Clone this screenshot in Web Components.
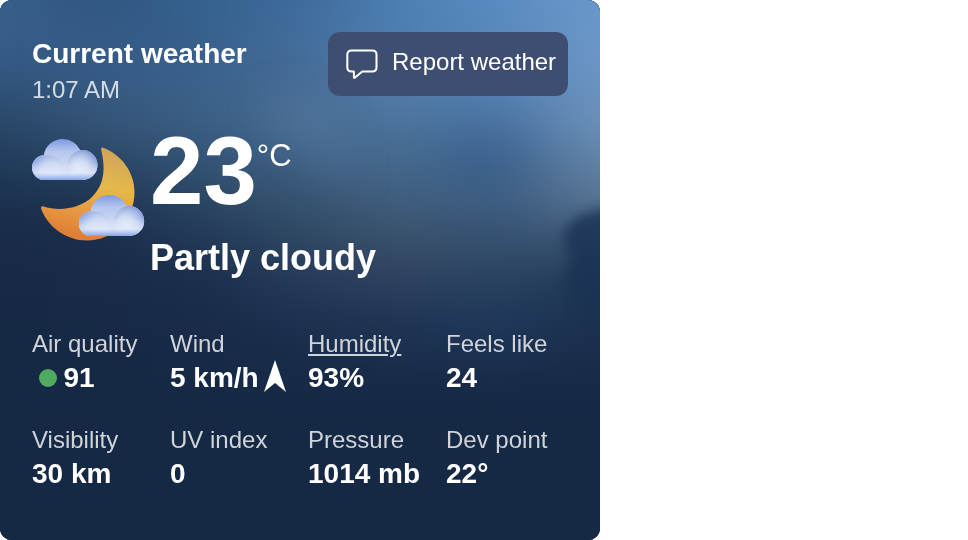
<!DOCTYPE html>
<html lang="en"><head><meta charset="utf-8"><title>Current weather</title>
<style>body{margin:0;background:#fff;font-family:"Liberation Sans",Arial,sans-serif}</style></head>
<body>
<weather-card>
  <weather-heading slot="heading" time="1:07 AM">Current weather</weather-heading>
  <report-button slot="action">Report weather</report-button>
  <weather-now slot="now" temp="23" unit="°C">Partly cloudy</weather-now>
  <weather-stat label="Air quality"><air-dot slot="before"></air-dot>91</weather-stat>
  <weather-stat label="Wind">5 km/h<wind-arrow slot="after"></wind-arrow></weather-stat>
  <weather-stat label="Humidity" underlined>93%</weather-stat>
  <weather-stat label="Feels like">24</weather-stat>
  <weather-stat label="Visibility">30 km</weather-stat>
  <weather-stat label="UV index">0</weather-stat>
  <weather-stat label="Pressure">1014 mb</weather-stat>
  <weather-stat label="Dev point">22°</weather-stat>
</weather-card>
<script>
const define=(name,render)=>customElements.define(name,class extends HTMLElement{
  connectedCallback(){ if(!this.shadowRoot) this.attachShadow({mode:'open'}).innerHTML=render(this); }
});

// Each row holds sky colours at 100px steps across the card, rows are 40px apart.
const sky=[
 '365f8a 30567f 34618f 3e6a9a 4d7fb4 5a8bc2 6897cb',
 '385d88 355a85 365f8c 426d9b 4d7eb2 5787bb 6c98c8',
 '31547d 365a84 3b628c 466a94 5580ab 5682b3 6b94c2',
 '294868 355579 3b5e84 486c93 4c749d 4a74a5 6c92ba',
 '213c5b 2a4664 335376 3f6086 46698f 3f638d 6384a9',
 '1b304e 1f3654 2a4663 36536f 405f7e 3e5e83 587592',
 '192b49 1a2d4c 223856 2d4662 3a506b 34506f 3a5572',
 '172945 182a48 1b2f4d 263b5a 2e4160 29435f 203856',
 '152844 162945 182b49 1c3050 203555 20385a 1c3150',
 '152844 152844 162945 182c4a 1a2e4d 1b3050 192d4a',
 '152844 152844 152844 152844 152844 152844 152844'
].map(r=>r.split(' '));
define('sky-backdrop',()=>`<style>:host{display:block}svg{display:block;width:600px;height:540px}</style>
<svg viewBox="0 0 600 540" aria-hidden="true"><defs>
${sky.map((r,i)=>`<linearGradient id="r${i}" gradientUnits="userSpaceOnUse" x1="0" y1="0" x2="600" y2="0">${r.map((c,j)=>`<stop offset="${j/6}" stop-color="#${c}"/>`).join('')}</linearGradient>`).join('')}
<filter id="v" filterUnits="userSpaceOnUse" x="-80" y="-80" width="760" height="760" color-interpolation-filters="sRGB"><feGaussianBlur stdDeviation="22 18"/></filter>
<filter id="s" filterUnits="userSpaceOnUse" x="0" y="0" width="760" height="540" color-interpolation-filters="sRGB"><feGaussianBlur stdDeviation="6"/></filter>
<filter id="l" filterUnits="userSpaceOnUse" x="-100" y="-100" width="800" height="700" color-interpolation-filters="sRGB"><feGaussianBlur stdDeviation="20"/></filter></defs>
<rect width="600" height="540" fill="#152844"/>
<g filter="url(#v)">${sky.map((r,i)=>`<rect x="-80" y="${i?i*40-20:-80}" width="760" height="${i?i==10?260:41:101}" fill="url(#r${i})"/>`).join('')}</g>
<g filter="url(#l)"><path d="M255 110Q300 75 335 120L360 190Q300 160 255 110Z" fill="#7696b8" opacity=".16"/><ellipse cx="480" cy="165" rx="38" ry="28" fill="#2d568a" opacity=".22"/></g>
<path filter="url(#s)" d="M640 200L594 211L579 216L566 228L563 241L570 258L565 282L571 300L585 315H650Z" fill="#1b3353" opacity=".82"/>
</svg>`);

define('weather-card',()=>`<style>
:host{display:grid;width:600px;height:540px;border-radius:12px;overflow:hidden;background:#152844;color:#fff}
sky-backdrop,main{grid-area:1/1}
main{z-index:1;display:flex;flex-direction:column;box-sizing:border-box;padding:32px 0 0 32px}
header{display:flex;justify-content:space-between;padding-right:32px;height:98px}
section{display:grid;grid-template-columns:repeat(4,138px);grid-auto-rows:96px;margin-top:196px}
.now{height:0}
</style><sky-backdrop></sky-backdrop><main><header><slot name="heading"></slot><slot name="action"></slot></header><div class="now"><slot name="now"></slot></div><section><slot></slot></section></main>`);

define('weather-heading',e=>`<style>:host{display:block}h1{margin:6px 0 0;font-size:28px;line-height:32px;font-weight:700}
p{margin:6px 0 0;font-size:24px;line-height:28px;color:rgba(255,255,255,.79)}</style><h1><slot></slot></h1><p>${e.getAttribute('time')}</p>`);

define('report-button',()=>`<style>:host{display:block}
button{display:flex;align-items:center;gap:14px;width:240px;height:64px;box-sizing:border-box;border:0;border-radius:12px;background:#3e4e71;color:#fff;font:24px "Liberation Sans",Arial,sans-serif;padding:0 0 4px 18px;white-space:nowrap}
svg{flex:none;margin-top:4px}</style>
<button><svg width="32" height="30" viewBox="0 0 32 30" fill="none" stroke="#fff" stroke-width="2" stroke-linejoin="round" aria-hidden="true"><path d="M5.8 1.5H26.2Q30.5 1.5 30.5 5.8V18.2Q30.5 22.5 26.2 22.5H16.2L8.8 28.7Q7.9 29.3 7.9 28.2V22.5H5.8Q1.3 22.5 1.3 18.2V5.8Q1.3 1.5 5.8 1.5Z"/></svg><slot></slot></button>`);

define('moon-icon',()=>`<style>:host{display:block}svg{display:block}</style>
<svg width="116" height="110" viewBox="30 135 116 110" aria-hidden="true"><defs>
<linearGradient id="m" gradientUnits="userSpaceOnUse" x1="112" y1="147" x2="92" y2="241"><stop stop-color="#cda25c"/><stop offset=".42" stop-color="#e6b94b"/><stop offset=".75" stop-color="#e69640"/><stop offset="1" stop-color="#df7c35"/></linearGradient>
<linearGradient id="top" gradientUnits="userSpaceOnUse" x1="0" y1="139" x2="0" y2="165"><stop stop-color="#7c98e0"/><stop offset=".45" stop-color="#b3c5ed"/><stop offset="1" stop-color="#cad8f2"/></linearGradient>
<radialGradient id="right" gradientUnits="userSpaceOnUse" cx="79" cy="170" r="22"><stop stop-color="#e6edfb"/><stop offset=".45" stop-color="#cfdbf4"/><stop offset=".78" stop-color="#a3b5e2"/><stop offset="1" stop-color="#7892d8"/></radialGradient>
<radialGradient id="left" gradientUnits="userSpaceOnUse" cx="53" cy="174" r="25"><stop stop-color="#dae4f7"/><stop offset=".5" stop-color="#c9d6f2"/><stop offset="1" stop-color="#859fe0"/></radialGradient>
<linearGradient id="base" gradientUnits="userSpaceOnUse" x1="0" y1="162" x2="0" y2="180"><stop stop-color="#dfe8f9" stop-opacity="0"/><stop offset=".6" stop-color="#e2eafa" stop-opacity=".75"/><stop offset="1" stop-color="#86a2ea"/></linearGradient>
<clipPath id="cl"><circle cx="62.8" cy="158.3" r="19.3"/><rect x="32" y="155.2" width="40" height="24.8" rx="12.4"/><rect x="60" y="150" width="37.5" height="30" rx="15"/><rect x="44" y="165" width="36" height="15"/></clipPath>
<g id="cloud" clip-path="url(#cl)"><rect x="32" y="138" width="66" height="43" fill="url(#top)"/>
<path d="M30 155.2H44.5C53 155.2 60 158 63.5 166L70 181H30Z" fill="url(#left)"/>
<path d="M67.5 166C67.5 157 74 150 82.5 150H99V181H63Q68 174 67.5 166Z" fill="url(#right)"/>
<rect x="32" y="162" width="66" height="18" fill="url(#base)"/></g></defs>
<path d="M102.5 147.5C121 154 134.5 172 134.5 192C134.5 220 113 240.5 87 240.5C66 240.5 48 227 41.2 209Q40.4 206 43 206.3C60 212 81 208 92 197C105 184 105.5 168 101.1 149.5Q101 147.2 102.5 147.5Z" fill="url(#m)"/>
<use href="#cloud"/><use href="#cloud" transform="translate(46.7 56)"/></svg>`);

define('weather-now',e=>`<style>:host{display:flex;margin-left:-2px;gap:4px}
moon-icon{margin-top:5px}.reading{display:flex;flex-direction:column}.temp{display:flex;gap:0;height:98px}
b{font-size:96px;line-height:82px}.unit{font-size:31px;line-height:36px;margin-top:8px}
p{margin:10px 0 0;font-size:36px;line-height:40px;font-weight:700}</style>
<moon-icon></moon-icon><div class="reading"><div class="temp"><b>${e.getAttribute('temp')}</b><span class="unit">${e.getAttribute('unit')}</span></div><p><slot></slot></p></div>`);

define('weather-stat',e=>`<style>:host{display:block;white-space:nowrap}
.label{font-size:24px;line-height:28px;margin-top:4px;color:#d0d3d9}:host([underlined]) .label{text-decoration:underline;text-underline-offset:2px;text-decoration-thickness:2px;text-decoration-skip-ink:auto}
.value{display:flex;align-items:center;height:32px;margin-top:4px;font-size:28px;line-height:32px;font-weight:700}</style>
<div class="label">${e.getAttribute('label')}</div><div class="value"><slot name="before"></slot><slot></slot><slot name="after"></slot></div>`);
define('air-dot',()=>`<style>:host{display:block;width:18.5px;height:18.5px;border-radius:50%;background:#50ab60;margin:0 6.5px 0 6.5px}</style>`);
define('wind-arrow',()=>`<style>:host{display:block;margin:-4px 0 0 4px}svg{display:block}</style><svg width="24" height="34" viewBox="0 0 24 34" aria-hidden="true"><path d="M12 1L23 33L12 24L1 33Z" fill="#fff"/></svg>`);
</script></body></html>
